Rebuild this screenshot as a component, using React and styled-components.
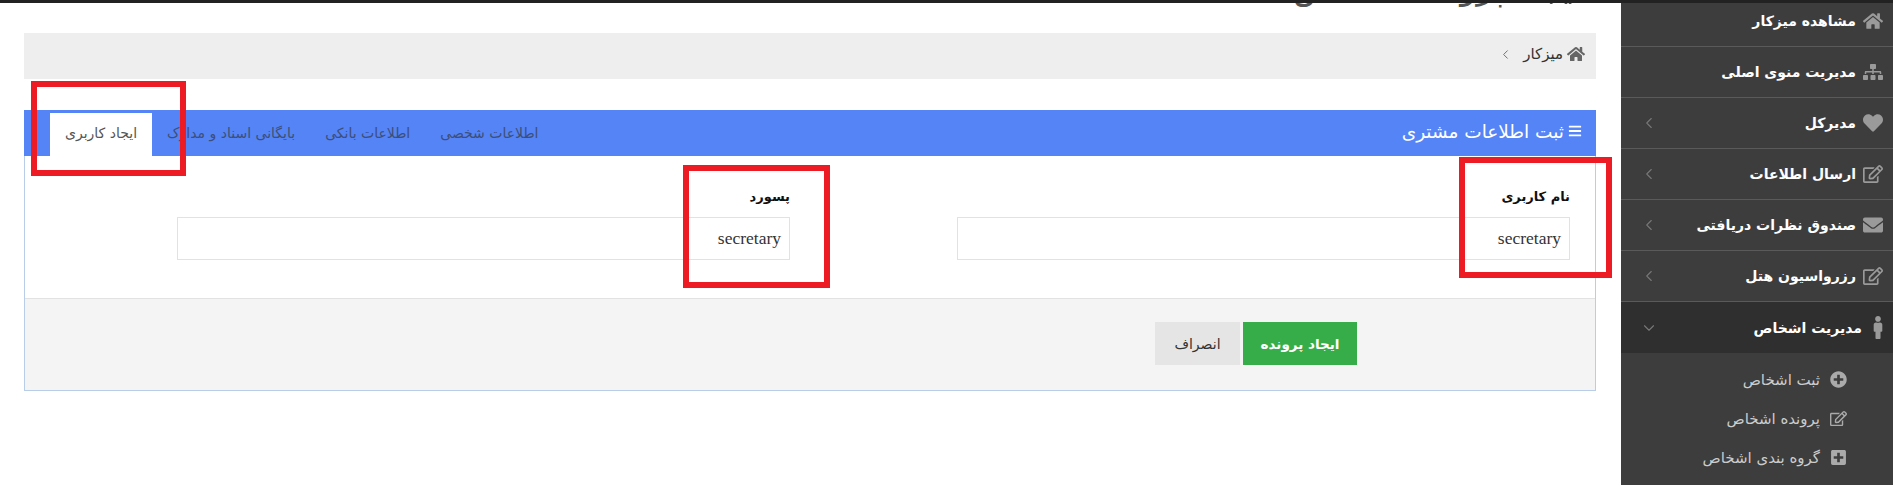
import React from 'react'
import styled, { createGlobalStyle } from 'styled-components'
import { FaHome, FaSitemap, FaHeart, FaRegEdit, FaEnvelope, FaMale, FaPlusCircle, FaPlusSquare, FaBars } from 'react-icons/fa'
import { ChevronLeft, ChevronDown } from 'lucide-react'

const Global = createGlobalStyle`
    html, body {
        margin: 0;
        padding: 0;
        background: #fff;
        height: 100%;
        overflow: hidden;
    }
    * {
        box-sizing: border-box;
    }
`

const Page = styled.div`
    position: relative;
    display: flex;
    flex-direction: column;
    width: 1893px;
    height: 485px;
    overflow: hidden;
    font-family: "DejaVu Sans", sans-serif;
`

const TopBar = styled.div`
    height: 3px;
    background: #222;
    flex: none;
    position: relative;
    z-index: 2;
`

const Body = styled.div`
    display: flex;
    flex-direction: row;
    flex: 1;
    min-height: 0;
`

const Main = styled.main`
    width: 1621px;
    padding: 0 25px 0 24px;
    overflow: hidden;
`

const TitleStrip = styled.div`
    height: 30px;
    overflow: hidden;
    direction: rtl;
`

const Title = styled.h1`
    margin: -36px 0 0;
    padding-right: 14px;
    font-size: 34px;
    line-height: 40px;
    font-weight: normal;
    color: #555;
    white-space: nowrap;
`

const Breadcrumb = styled.div`
    height: 46px;
    background: #eee;
    display: flex;
    align-items: center;
    gap: 10px;
    direction: rtl;
    padding: 0 11px 4px;
    font-size: 15px;
    color: #333;
    svg {
        color: #666;
    }
`

const Crumb = styled.span`
    display: flex;
    align-items: center;
    gap: 4px;
`

const Panel = styled.section`
    margin-top: 31px;
    height: 281px;
    border: 1px solid #b9cde8;
    border-top: 0;
    display: flex;
    flex-direction: column;
`

const PanelHead = styled.div`
    height: 46px;
    margin: 0 -1px;
    background: #5584f6;
    display: flex;
    align-items: flex-end;
    justify-content: space-between;
    direction: rtl;
    padding: 0 26px;
    flex: none;
`

const PanelTitle = styled.div`
    align-self: center;
    display: flex;
    align-items: center;
    gap: 4px;
    margin: 0 -12px 4px 0;
    color: #fff;
    font-size: 18.5px;
`

const Tabs = styled.div`
    display: flex;
`

const Tab = styled.div`
    height: 43px;
    padding: 0 15px 4px;
    display: flex;
    align-items: center;
    font-size: 14px;
    color: ${p => (p.$active ? '#555' : '#3d4f78')};
    background: ${p => (p.$active ? '#fff' : 'transparent')};
`

const Form = styled.div`
    flex: 1;
    display: flex;
    direction: rtl;
    padding: 33px 25px 0 0;
    gap: 167px;
`

const Field = styled.div`
    width: 613px;
`

const Label = styled.label`
    display: block;
    height: 28px;
    font-size: 13px;
    font-weight: bold;
    color: #111;
`

const Input = styled.div`
    height: 43px;
    border: 1px solid #e2e2e2;
    background: #fff;
    padding: 0 8px;
    display: flex;
    align-items: center;
    justify-content: flex-start;
    font-family: "Liberation Serif", serif;
    font-size: 17.5px;
    color: #333;
`

const Footer = styled.div`
    height: 92px;
    flex: none;
    background: #f4f4f4;
    border-top: 1px solid #e2e2e2;
    display: flex;
    direction: rtl;
    gap: 3px;
    padding: 23px 238px 0 0;
`

const Button = styled.div`
    height: 43px;
    width: ${p => p.$w}px;
    display: flex;
    align-items: center;
    justify-content: center;
    font-size: ${p => (p.$primary ? '13.5px' : '14px')};
    font-weight: ${p => (p.$primary ? 'bold' : 'normal')};
    background: ${p => (p.$primary ? '#37ad4a' : '#e5e5e5')};
    color: ${p => (p.$primary ? '#fff' : '#333')};
`

const Sidebar = styled.aside`
    width: 272px;
    background: #3d3d3d;
    direction: rtl;
    flex: none;
    overflow: hidden;
`

const NavList = styled.div`
    margin-top: -7px;
`

const NavItem = styled.div`
    height: 51px;
    display: flex;
    align-items: center;
    padding-right: 10px;
    color: #fff;
    font-size: 14px;
    font-weight: bold;
    background: ${p => (p.$open ? '#2f2f2f' : 'transparent')};
    border-bottom: ${p => (p.$open ? '0' : '1px solid #5a5a5a')};
`

const NavIcon = styled.span`
    width: ${p => p.$w || 20}px;
    display: flex;
    justify-content: center;
    color: #9a9a9a;
    font-size: ${p => p.$size || 20}px;
    margin-left: ${p => (p.$w ? 11 : 7)}px;
    flex: none;
`

const NavArrow = styled.span`
    margin-right: auto;
    margin-left: 19px;
    color: #777;
    display: flex;
`

const SubMenu = styled.div`
    padding: 7px 46px 0 0;
`

const SubItem = styled.div`
    height: 39px;
    display: flex;
    align-items: center;
    color: #ccc;
    font-size: 15px;
`

const SubIcon = styled.span`
    width: 18px;
    display: flex;
    justify-content: center;
    color: #aaa;
    font-size: 17px;
    margin-left: 9px;
    flex: none;
`

const RedBox = styled.div`
    position: absolute;
    left: ${p => p.$x}px;
    top: ${p => p.$y}px;
    width: ${p => p.$w}px;
    height: ${p => p.$h}px;
    border: 6px solid #ed1c24;
    pointer-events: none;
`

const nav = [
    { icon: <FaHome />, label: 'مشاهده میزکار' },
    { icon: <FaSitemap />, label: 'مدیریت منوی اصلی' },
    { icon: <FaHeart />, label: 'مدیرکل', arrow: true },
    { icon: <FaRegEdit />, label: 'ارسال اطلاعات', arrow: true },
    { icon: <FaEnvelope />, label: 'صندوق نظرات دریافتی', arrow: true },
    { icon: <FaRegEdit />, label: 'رزرواسیون هتل', arrow: true },
]

const sub = [
    { icon: <FaPlusCircle />, label: 'ثبت اشخاص' },
    { icon: <FaRegEdit />, label: 'پرونده اشخاص' },
    { icon: <FaPlusSquare />, label: 'گروه بندی اشخاص' },
]

const tabs = ['اطلاعات شخصی', 'اطلاعات بانکی', 'بایگانی اسناد و مدارک', 'ایجاد کاربری']

export default function App() {
    return (
        <Page>
            <Global />
            <TopBar />
            <Body>
                <Main>
                    <TitleStrip>
                        <Title>ایجاد پرونده اشخاص</Title>
                    </TitleStrip>
                    <Breadcrumb>
                        <Crumb><FaHome size={18} /> میزکار</Crumb>
                        <ChevronLeft size={15} strokeWidth={1.5} />
                    </Breadcrumb>
                    <Panel>
                        <PanelHead>
                            <PanelTitle><FaBars size={14} /> ثبت اطلاعات مشتری</PanelTitle>
                            <Tabs>
                                {tabs.map((t, i) => (
                                    <Tab key={t} $active={i === 3}>{t}</Tab>
                                ))}
                            </Tabs>
                        </PanelHead>
                        <Form>
                            <Field>
                                <Label>نام کاربری</Label>
                                <Input>secretary</Input>
                            </Field>
                            <Field>
                                <Label>پسورد</Label>
                                <Input>secretary</Input>
                            </Field>
                        </Form>
                        <Footer>
                            <Button $primary $w={114}>ایجاد پرونده</Button>
                            <Button $w={85}>انصراف</Button>
                        </Footer>
                    </Panel>
                </Main>
                <Sidebar>
                    <NavList>
                        {nav.map(n => (
                            <NavItem key={n.label}>
                                <NavIcon>{n.icon}</NavIcon>
                                {n.label}
                                {n.arrow && <NavArrow><ChevronLeft size={18} strokeWidth={1.5} /></NavArrow>}
                            </NavItem>
                        ))}
                        <NavItem $open>
                            <NavIcon $w={10} $size={23}>
                                <FaMale />
                            </NavIcon>
                            مدیریت اشخاص
                            <NavArrow><ChevronDown size={18} strokeWidth={1.5} /></NavArrow>
                        </NavItem>
                    </NavList>
                    <SubMenu>
                        {sub.map(s => (
                            <SubItem key={s.label}>
                                <SubIcon>{s.icon}</SubIcon>
                                {s.label}
                            </SubItem>
                        ))}
                    </SubMenu>
                </Sidebar>
            </Body>
            <RedBox $x={31} $y={81} $w={155} $h={95} />
            <RedBox $x={683} $y={165} $w={147} $h={123} />
            <RedBox $x={1459} $y={157} $w={153} $h={121} />
        </Page>
    )
}
